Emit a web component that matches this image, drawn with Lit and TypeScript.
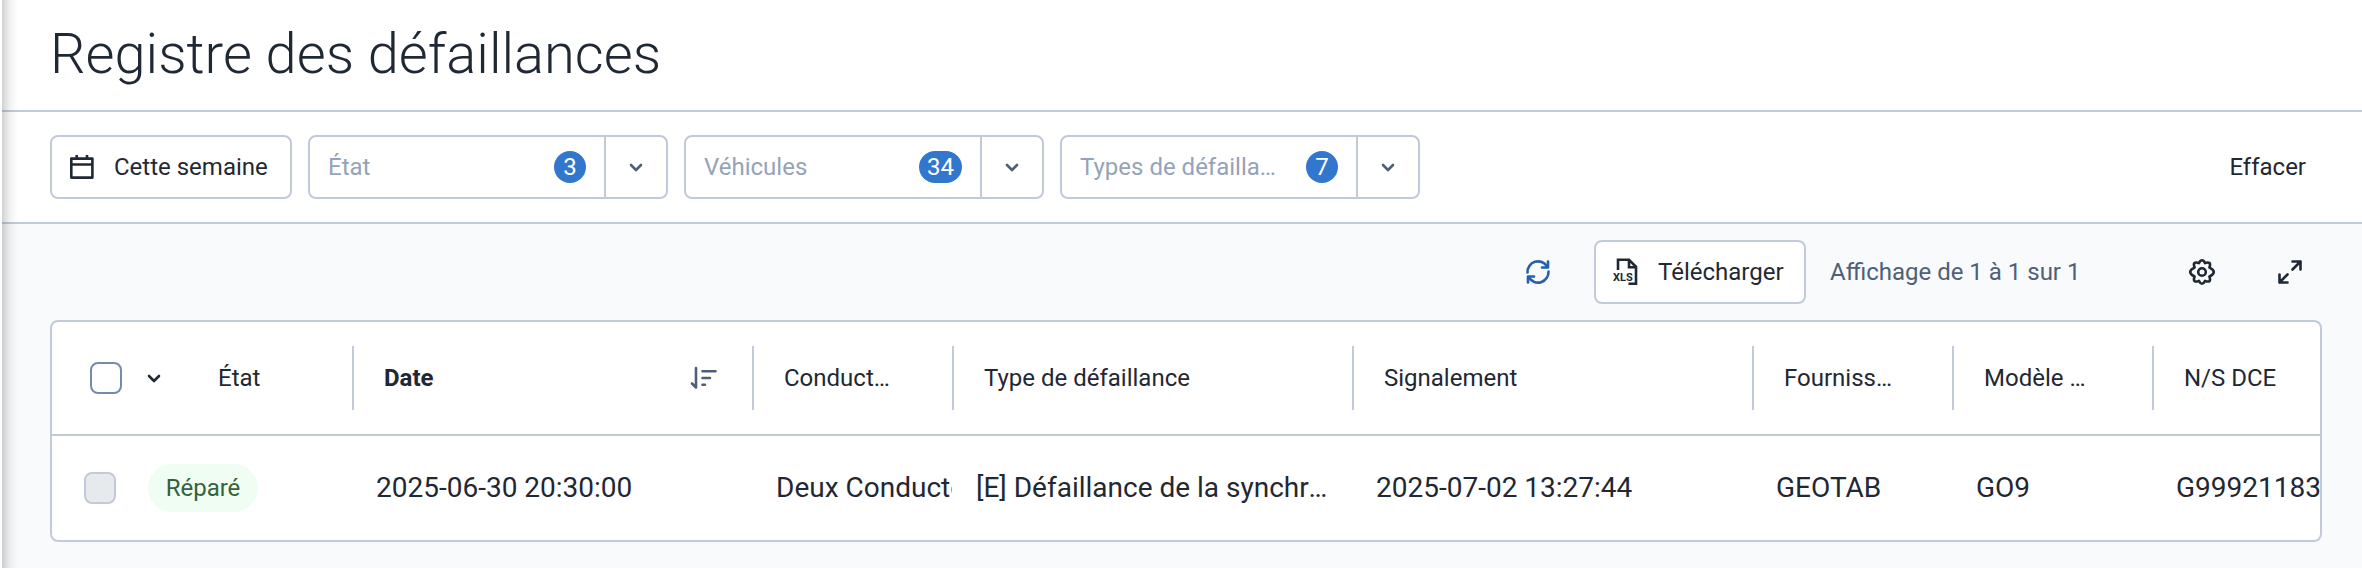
import { LitElement, html, css, svg } from "lit";
import { customElement } from "lit/decorators.js";

const filters = [
  { id: "etat", label: "État", count: 3 },
  { id: "vehicules", label: "Véhicules", count: 34 },
  { id: "types", label: "Types de défaillance", count: 7 },
];

const icon = (size: number, viewBox: string, body: unknown) =>
  html`<svg class="icon" width=${size} height=${size} viewBox=${viewBox} fill="none" stroke="currentColor" aria-hidden="true">${body}</svg>`;

const calendar = icon(32, "0 0 32 32", svg`<path stroke-width="2.6" stroke-linejoin="round" d="M5.3 7.6h21.1v19H5.3zM5.3 13.5h21.1"/><path stroke-width="2.6" d="M10.700 4v4M21 4v4"/>`);
const chevron = icon(24, "0 0 24 24", svg`<path stroke-width="2.6" stroke-linecap="round" stroke-linejoin="round" d="M7 10l5 5 5-5"/>`);
const refresh = icon(32, "0 0 32 32", svg`<path stroke-width="2.6" stroke-linecap="round" d="M5.500 16.500A10.500 10.500 0 0 1 25 10.500M26.500 15.500A10.500 10.500 0 0 1 7 21.500"/><path stroke-width="2.6" stroke-linecap="round" stroke-linejoin="round" d="M26 5.500v6h-6M6 26.500v-6h6"/>`);
const gear = icon(32, "0 0 32 32", svg`<path stroke-width="2.6" stroke-linejoin="round" d="M16 4.200c1.800 0 2.200 1.200 3 2.900 1.800-.7 3.200-1.300 4.500-.1 1.200 1.300.6 2.700-.1 4.500 1.700.8 4.400 2 4.400 4.500s-2.700 3.700-4.400 4.500c.7 1.800 1.300 3.200.1 4.500-1.300 1.200-2.700.6-4.500-.1-.8 1.700-1.200 2.900-3 2.900s-2.200-1.200-3-2.900c-1.800.7-3.200 1.300-4.500.1-1.200-1.300-.6-2.700.1-4.500-1.700-.8-4.400-2-4.400-4.500s2.700-3.700 4.400-4.500c-.7-1.800-1.300-3.200-.1-4.500 1.300-1.200 2.700-.6 4.500.1.800-1.700 1.200-2.900 3-2.900z"/><circle cx="16" cy="16" r="3.800" stroke-width="2.6"/>`);
const expand = icon(32, "0 0 32 32", svg`<path stroke-width="2.6" stroke-linecap="round" stroke-linejoin="round" d="M18.500 13.500l8-8M18.500 5.500h8v8M13.500 18.500l-8 8M5.500 18.500v8h8"/>`);
const sort = icon(32, "0 0 32 32", svg`<path stroke-width="2.6" stroke-linecap="round" stroke-linejoin="round" d="M8 6v19.500M4 21.500l4 4"/><path stroke-width="2.6" stroke-linecap="round" d="M14.500 9.300h13M14.500 16h7.500M14.500 22.700h2.500"/>`);
const xls = html`<svg class="icon" width="32" height="32" viewBox="0 0 32 32" fill="none" stroke="currentColor" aria-hidden="true">
  <path stroke-width="2.6" d="M8 14V3.800h11l7 7v17H18.500M19 4v7.200h7"/>
  <text x="3" y="25" font-size="11" font-weight="700" fill="currentColor" stroke="none">XLS</text></svg>`;

@customElement("app-root")
export class AppRoot extends LitElement {
  static styles = css`
    :host { display: block; min-height: 100vh; box-sizing: border-box; position: relative; background: #f9fafc; color: #1f2833; font: 24px/32px Roboto, sans-serif; }
    *, *::before { box-sizing: border-box; }
    .edge { position: absolute; top: 0; bottom: 0; left: 0; width: 18px; pointer-events: none; border-left: 2px solid #fff; background: linear-gradient(90deg, rgba(60, 70, 65, .24), rgba(60, 70, 65, .07) 50%, transparent); }
    .icon { display: block; flex: none; }
    button { font: inherit; color: inherit; background: none; border: 0; padding: 0; margin: 0; }
    .title { background: #fff; border-bottom: 2px solid #c2cad9; padding: 22px 50px 24px; }
    h1 { margin: 0; font-size: 56px; line-height: 64px; font-weight: 300; }
    .filters { display: flex; gap: 16px; align-items: center; background: #fff; border-bottom: 2px solid #c2cad9; padding: 23px 40px 23px 50px; }
    .outlined { display: flex; align-items: center; gap: 16px; height: 64px; padding: 0 14px; border: 2px solid #c2cad9; border-radius: 8px; background: #fff; white-space: nowrap; }
    .range { width: 242px; }
    .combo { display: flex; width: 360px; height: 64px; border: 2px solid #c2cad9; border-radius: 8px; }
    .combo input { flex: 1; min-width: 0; border: 0; padding: 0; margin: 0 24px 0 18px; background: none; font: inherit; color: inherit; text-overflow: ellipsis; }
    .combo input::placeholder { color: #95a3b8; opacity: 1; }
    .count { align-self: center; min-width: 32px; height: 32px; padding: 0 8px; border-radius: 16px; background: #3277ce; color: #fff; text-align: center; margin-right: 18px; }
    .drop { width: 62px; display: grid; place-items: center; border-left: 2px solid #c2cad9; color: #4e6078; }
    .clear { margin-left: auto; padding: 0 16px; }
    .tools { display: flex; align-items: center; justify-content: flex-end; padding: 16px 56px; }
    .refresh { color: #2360ad; margin-right: 40px; }
    .download { width: 212px; }
    .summary { color: #4e6078; width: 268px; margin: 0 88px 0 24px; }
    .gear { margin-right: 56px; }
    .grid { margin: 0 40px 0 50px; border: 2px solid #c2cad9; border-radius: 8px; background: #fff; overflow: hidden; }
    table { width: 100%; table-layout: fixed; border-collapse: separate; border-spacing: 0; }
    th, td { padding: 0; font-weight: 400; text-align: left; white-space: nowrap; overflow: hidden; }
    .c-state { width: 300px; } .c-wide { width: 400px; } .c-small { width: 200px; }
    th { height: 114px; border-bottom: 2px solid #c2cad9; }
    td { height: 104px; padding-left: 24px; font-size: 28px; }
    .head { display: flex; align-items: center; justify-content: space-between; height: 64px; padding: 0 32px 0 30px; border-left: 2px solid #c2cad9; }
    .head.short { padding-right: 56px; }
    .head span, .clip { overflow: hidden; text-overflow: ellipsis; }
    .sorted { font-weight: 700; }
    .sort { color: #4e6078; }
    .first { display: flex; align-items: center; padding-left: 38px; }
    .first.row { padding-left: 32px; }
    .box { appearance: none; width: 32px; height: 32px; margin: 0; border: 2px solid #768ba8; border-radius: 8px; background: #fff; }
    .box:disabled { background: #e6eaed; border-color: #c2cad9; }
    .menu { margin: 0 52px 0 20px; }
    .pill { margin-left: 32px; min-width: 110px; height: 48px; padding: 0 16px; border-radius: 24px; background: #f0fdf3; color: #35623b; font-size: 24px; line-height: 48px; text-align: center; }
    td.state { padding-left: 0; }
    td.clip { padding-right: 24px; }
  `;

  head(label: string, short = false) {
    return html`<th scope="col"><div class="head ${short ? "short" : ""}"><span>${label}</span></div></th>`;
  }

  render() {
    return html`
      <header class="title"><h1>Registre des défaillances</h1></header>
      <section class="filters">
        <button class="outlined range">${calendar}<span>Cette semaine</span></button>
        ${filters.map((f) => html`
          <div class="combo">
            <input id=${f.id} aria-label=${f.label} placeholder=${f.label} />
            <span class="count">${f.count}</span>
            <button class="drop" aria-label="Ouvrir ${f.label}">${chevron}</button>
          </div>`)}
        <button class="clear">Effacer</button>
      </section>
      <section class="tools">
        <button class="refresh" aria-label="Actualiser">${refresh}</button>
        <button class="outlined download">${xls}<span>Télécharger</span></button>
        <span class="summary">Affichage de 1 à 1 sur 1</span>
        <button class="gear" aria-label="Paramètres">${gear}</button>
        <button aria-label="Agrandir">${expand}</button>
      </section>
      <div class="grid">
        <table>
          <colgroup>
            <col class="c-state" /><col class="c-wide" /><col class="c-small" /><col class="c-wide" /><col class="c-wide" /><col class="c-small" /><col class="c-small" /><col />
          </colgroup>
          <thead>
            <tr>
              <th scope="col"><div class="first"><input class="box" type="checkbox" aria-label="Tout sélectionner" /><button class="menu" aria-label="Options de sélection">${chevron}</button><span>État</span></div></th>
              <th scope="col" aria-sort="descending"><div class="head sorted"><span>Date</span><button class="sort" aria-label="Trier">${sort}</button></div></th>
              ${this.head("Conducteurs", true)}
              ${this.head("Type de défaillance")}
              ${this.head("Signalement")}
              ${this.head("Fournisseur", true)}
              ${this.head("Modèle de DCE", true)}
              ${this.head("N/S DCE")}
            </tr>
          </thead>
          <tbody>
            <tr>
              <td class="state"><div class="first row"><input class="box" type="checkbox" disabled aria-label="Sélectionner la ligne" /><span class="pill">Réparé</span></div></td>
              <td>2025-06-30 20:30:00</td>
              <td>Deux Conducteurs</td>
              <td class="clip">[E] Défaillance de la synchronisation</td>
              <td>2025-07-02 13:27:44</td>
              <td>GEOTAB</td>
              <td>GO9</td>
              <td>G99921183</td>
            </tr>
          </tbody>
        </table>
      </div>
      <div class="edge"></div>
    `;
  }
}
